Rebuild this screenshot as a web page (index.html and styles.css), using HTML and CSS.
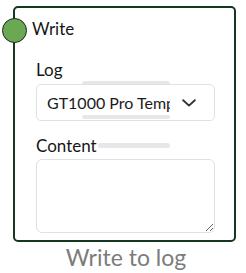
FILE: index.html
```html
<!DOCTYPE html>
<html>
<head>
<meta charset="utf-8">
<link rel="stylesheet" href="styles.css">
</head>
<body>
<div class="canvas">
  <div class="node">
    <span class="port"></span>
    <span class="bar bar-a"></span>
    <div class="title">Write</div>
    <div class="body">
      <div class="field">
        <label class="label">Log</label>
        <div class="select">
          <span class="select-text">GT1000 Pro Temperature Log</span>
          <svg class="chev" width="14" height="8" viewBox="0 0 14 8"><path d="M1.2 1.2 L7 6.6 L12.8 1.2" fill="none" stroke="#333" stroke-width="1.9" stroke-linecap="round" stroke-linejoin="round"/></svg>
          <span class="bar bar-b"></span>
        </div>
      </div>
      <div class="field field-content">
        <label class="label">Content</label>
        <span class="bar bar-c"></span>
        <textarea class="textarea"></textarea>
      </div>
    </div>
  </div>
  <div class="caption">Write to log</div>
</div>
</body>
</html>
```
FILE: styles.css
```css
html, body {
  margin: 0;
  padding: 0;
  background: #ffffff;
}
body {
  font-family: Lato, "Noto Sans", sans-serif;
  color: #1b1b1b;
}
.canvas {
  padding: 6px 10px 0 13px;
  width: 223px;
}
.node {
  position: relative;
  box-sizing: border-box;
  width: 223px;
  height: 236px;
  border: 2px solid #15361f;
  border-radius: 5px;
  padding: 10px 19px 0 0;
  background: #ffffff;
}
.port {
  position: absolute;
  left: -13px;
  top: 9.5px;
  width: 23px;
  height: 23px;
  border-radius: 50%;
  background: #6aa853;
  border: 1px solid #1d2a1f;
  z-index: 3;
}
.title {
  font-size: 17px;
  line-height: 21px;
  padding-left: 17px;
  color: #151515;
}
.body {
  padding-left: 21px;
  padding-top: 20px;
  display: flex;
  flex-direction: column;
  gap: 14px;
}
.field {
  position: relative;
  display: flex;
  flex-direction: column;
  gap: 4px;
}
.field-content {
  gap: 3px;
}
.label {
  font-size: 17px;
  line-height: 21px;
  color: #151515;
  position: relative;
  z-index: 2;
}
.select {
  position: relative;
  z-index: 1;
  box-sizing: border-box;
  height: 37px;
  width: 179px;
  border: 1px solid #dfe1e6;
  border-radius: 5px;
  background: #ffffff;
  display: flex;
  align-items: center;
  padding-left: 10px;
}
.select-text {
  font-size: 16px;
  line-height: 35px;
  width: 123px;
  white-space: nowrap;
  overflow: hidden;
  color: #1b1b1b;
}
.chev {
  margin-left: 12px;
  display: block;
}
.bar {
  position: absolute;
  background: #e7e7e9;
  border-radius: 3px;
}
.bar-a {
  left: 67px;
  top: 73px;
  width: 88px;
  height: 6px;
  z-index: 0;
}
.bar-b {
  left: 45px;
  top: 30px;
  width: 88px;
  height: 4px;
  border-radius: 2px;
}
.bar-c {
  left: 62px;
  top: 8px;
  width: 72px;
  height: 5px;
  z-index: 1;
}
.textarea {
  display: block;
  box-sizing: border-box;
  width: 179px;
  height: 74px;
  margin: 0;
  border: 1px solid #dfe1e6;
  border-radius: 6px;
  background: #ffffff;
  outline: none;
  font-family: Lato, sans-serif;
}
.caption {
  text-align: center;
  font-size: 23px;
  line-height: 28px;
  margin-top: 1px;
  color: #7c7c7c;
  padding-left: 3px;
}
```
